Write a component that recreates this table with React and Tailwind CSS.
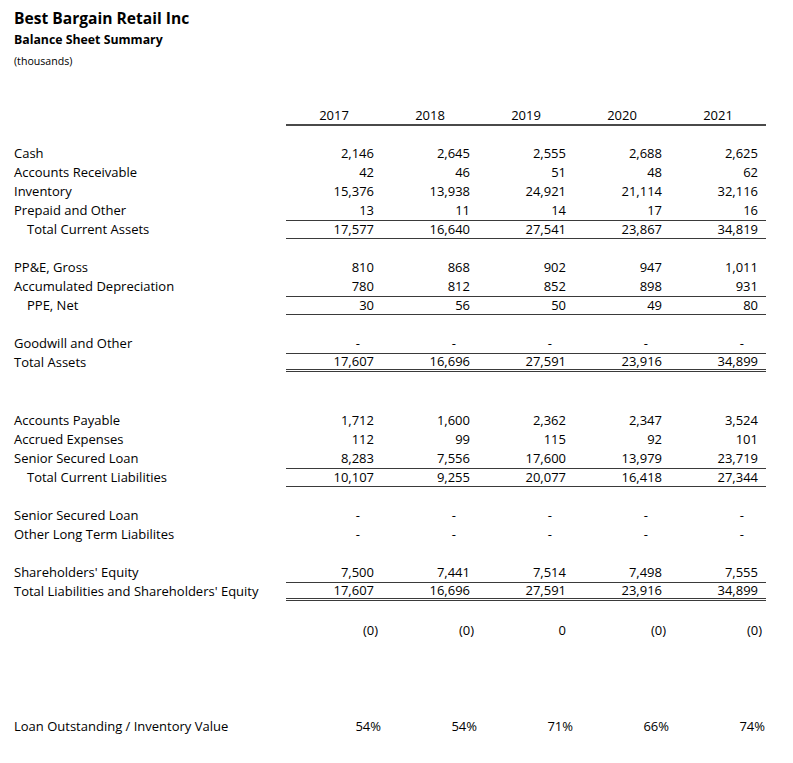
import React from "react";

const years = ["2017", "2018", "2019", "2020", "2021"];

const rows = [
  { label: "Cash", values: ["2,146", "2,645", "2,555", "2,688", "2,625"] },
  { label: "Accounts Receivable", values: ["42", "46", "51", "48", "62"] },
  { label: "Inventory", values: ["15,376", "13,938", "24,921", "21,114", "32,116"] },
  { label: "Prepaid and Other", values: ["13", "11", "14", "17", "16"] },
  { label: "Total Current Assets", indent: true, line: "box", values: ["17,577", "16,640", "27,541", "23,867", "34,819"] },
  { blank: true },
  { label: "PP&E, Gross", values: ["810", "868", "902", "947", "1,011"] },
  { label: "Accumulated Depreciation", values: ["780", "812", "852", "898", "931"] },
  { label: "PPE, Net", indent: true, line: "box", values: ["30", "56", "50", "49", "80"] },
  { blank: true },
  { label: "Goodwill and Other", values: ["-", "-", "-", "-", "-"] },
  { label: "Total Assets", line: "double", values: ["17,607", "16,696", "27,591", "23,916", "34,899"] },
  { blank: true, tall: true },
  { blank: true },
  { label: "Accounts Payable", values: ["1,712", "1,600", "2,362", "2,347", "3,524"] },
  { label: "Accrued Expenses", values: ["112", "99", "115", "92", "101"] },
  { label: "Senior Secured Loan", values: ["8,283", "7,556", "17,600", "13,979", "23,719"] },
  { label: "Total Current Liabilities", indent: true, line: "box", values: ["10,107", "9,255", "20,077", "16,418", "27,344"] },
  { blank: true },
  { label: "Senior Secured Loan", values: ["-", "-", "-", "-", "-"] },
  { label: "Other Long Term Liabilites", values: ["-", "-", "-", "-", "-"] },
  { blank: true },
  { label: "Shareholders' Equity", values: ["7,500", "7,441", "7,514", "7,498", "7,555"] },
  { label: "Total Liabilities and Shareholders' Equity", line: "double", values: ["17,607", "16,696", "27,591", "23,916", "34,899"] },
  { blank: true, tall: true },
  { label: "", values: ["(0)", "(0)", "0", "(0)", "(0)"] },
  { blank: true },
  { blank: true },
  { blank: true, tall: true },
  { blank: true },
  { label: "Loan Outstanding / Inventory Value", values: ["54%", "54%", "71%", "66%", "74%"] },
];

function Value({ v, line }) {
  let pad = "pr-[8px]";
  if (v === "-") pad = "pr-[22px]";
  else if (v.startsWith("(")) pad = "pr-[4px]";
  else if (v.endsWith("%")) pad = "pr-[1px]";
  let border = "";
  if (line === "box") border = "border-t border-b border-[#3a3a3a]";
  if (line === "double") border = "border-t border-b-[3px] border-double border-[#3a3a3a] pb-[1px]";
  return (
    <div className={`h-[19px] flex items-center justify-end ${pad} ${border}`}>
      {v}
    </div>
  );
}

function Row({ row }) {
  if (row.blank) return <div className={row.tall ? "h-[20px]" : "h-[19px]"} />;
  return (
    <div className="grid grid-cols-[272px_repeat(5,96px)] grid-rows-[19px] h-[19px]">
      <div className={`flex items-center whitespace-nowrap ${row.indent ? "pl-[13px]" : ""}`}>
        {row.label}
      </div>
      {row.values.map((v, i) => (
        <Value key={i} v={v} line={row.line} />
      ))}
    </div>
  );
}

export default function App() {
  return (
    <div className="w-[793px] h-[763px] bg-white text-black font-['Open_Sans',sans-serif] text-[13px] leading-[15px] pt-[8px] pl-[14px] overflow-hidden">
      <div className="h-[21px] leading-[21px] text-[15.6px] font-bold">Best Bargain Retail Inc</div>
      <div className="h-[22px] leading-[22px] text-[12.3px] font-bold">Balance Sheet Summary</div>
      <div className="h-[20px] leading-[20px] text-[10.6px]">(thousands)</div>
      <div className="h-[34px]" />

      <div className="grid grid-cols-[272px_repeat(5,96px)] grid-rows-[21px] h-[21px]">
        <div />
        {years.map((y) => (
          <div key={y} className="flex items-center justify-center pt-[1px] border-b-2 border-[#4a4a4a]">
            {y}
          </div>
        ))}
      </div>
      <div className="h-[18px]" />

      {rows.map((r, i) => (
        <Row key={i} row={r} />
      ))}
    </div>
  );
}
